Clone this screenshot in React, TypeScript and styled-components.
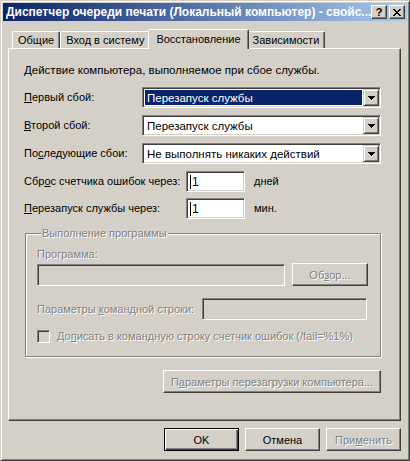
import styled, { createGlobalStyle } from "styled-components";

const GlobalStyle = createGlobalStyle`
  html, body {
    margin: 0;
    padding: 0;
    background: #d4d0c8;
  }
  body {
    font-family: "Liberation Sans", Arial, sans-serif;
    font-size: 11px;
    color: #000;
  }
`;

const Window = styled.div`
  box-sizing: border-box;
  width: 410px;
  height: 461px;
  background: #d4d0c8;
  border: 1px solid;
  border-color: #d4d0c8 #404040 #404040 #d4d0c8;
  box-shadow: inset 1px 1px #fff, inset -1px -1px #808080;
  padding: 2px;
  display: flex;
  flex-direction: column;
`;

const TitleBar = styled.div`
  height: 18px;
  flex-shrink: 0;
  display: flex;
  align-items: center;
  padding: 0 2px 0 3px;
  background: linear-gradient(to right, #0a246a, #a6caf0);
`;

const Title = styled.div`
  flex: 1;
  color: #fff;
  font-weight: bold;
  font-size: 12px;
  white-space: nowrap;
  overflow: hidden;
`;

const CaptionButton = styled.div<{ $gap?: boolean }>`
  box-sizing: border-box;
  width: 16px;
  height: 14px;
  flex-shrink: 0;
  margin-left: ${(p) => (p.$gap ? "2px" : "0")};
  background: #d4d0c8;
  border: 1px solid;
  border-color: #fff #404040 #404040 #fff;
  box-shadow: inset -1px -1px #808080;
  display: flex;
  align-items: center;
  justify-content: center;
  font-weight: bold;
  font-size: 11px;
  line-height: 1;
  color: #000;
`;

const Content = styled.div`
  flex: 1;
  display: flex;
  flex-direction: column;
  padding: 8px 6px 0 5px;
`;

const TabStrip = styled.div`
  display: flex;
  align-items: flex-end;
  height: 20px;
  margin: 0 0 -1px 4px;
  position: relative;
  z-index: 1;
`;

const Tab = styled.div<{ $active?: boolean }>`
  box-sizing: border-box;
  height: ${(p) => (p.$active ? "20px" : "17px")};
  margin: ${(p) => (p.$active ? "0 -2px" : "0 0 1px 0")};
  padding: ${(p) => (p.$active ? "0 7px" : "0 5px")};
  padding-bottom: ${(p) => (p.$active ? "2px" : "0")};
  position: relative;
  z-index: ${(p) => (p.$active ? 2 : 1)};
  background: #d4d0c8;
  border-top: 1px solid #fff;
  border-left: 1px solid #fff;
  border-right: 1px solid #404040;
  border-radius: 2px 2px 0 0;
  box-shadow: inset -1px 0 #808080;
  display: flex;
  align-items: center;
  white-space: nowrap;
`;

const Panel = styled.div`
  box-sizing: border-box;
  height: 373px;
  background: #d4d0c8;
  border: 1px solid;
  border-color: #fff #404040 #404040 #fff;
  box-shadow: inset -1px -1px #808080;
  padding: 15px 19px 0 15px;
  display: flex;
  flex-direction: column;
`;

const Text = styled.div<{ $disabled?: boolean }>`
  line-height: 13px;
  white-space: nowrap;
  color: ${(p) => (p.$disabled ? "#808080" : "#000")};
  text-shadow: ${(p) => (p.$disabled ? "1px 1px 0 #fff" : "none")};
`;

const Heading = styled(Text)`
  font-size: 11.5px;
`;

const Key = styled.span`
  text-decoration: underline;
`;

const Row = styled.div<{ $top: number }>`
  display: flex;
  align-items: center;
  margin-top: ${(p) => p.$top}px;
`;

const Label = styled(Text)<{ $width: number }>`
  width: ${(p) => p.$width}px;
  flex-shrink: 0;
`;

const Combo = styled.div`
  box-sizing: border-box;
  width: 240px;
  height: 21px;
  display: flex;
  background: #fff;
  border: 1px solid;
  border-color: #808080 #fff #fff #808080;
  box-shadow: inset 1px 1px #404040, inset -1px -1px #d4d0c8;
  padding: 1px;
`;

const ComboValue = styled.div<{ $selected?: boolean }>`
  flex: 1;
  margin: 1px;
  padding: 0 2px;
  display: flex;
  align-items: center;
  white-space: nowrap;
  font-size: 11.5px;
  background: ${(p) => (p.$selected ? "#0a246a" : "#fff")};
  color: ${(p) => (p.$selected ? "#fff" : "#000")};
`;

const DropButton = styled.div`
  box-sizing: border-box;
  width: 16px;
  height: 17px;
  background: #d4d0c8;
  border: 1px solid;
  border-color: #d4d0c8 #404040 #404040 #d4d0c8;
  box-shadow: inset 1px 1px #fff, inset -1px -1px #808080;
  display: flex;
  align-items: center;
  justify-content: center;
`;

const Field = styled.div<{ $width: number; $height?: number; $disabled?: boolean }>`
  box-sizing: border-box;
  width: ${(p) => p.$width}px;
  height: ${(p) => p.$height ?? 21}px;
  flex-shrink: 0;
  background: ${(p) => (p.$disabled ? "#d4d0c8" : "#fff")};
  border: 1px solid;
  border-color: #808080 #fff #fff #808080;
  box-shadow: inset 1px 1px #404040, inset -1px -1px #d4d0c8;
  padding: 0 3px;
  display: flex;
  align-items: center;
  font-size: 12px;
`;

const Caret = styled.span`
  display: inline-block;
  width: 1px;
  height: 14px;
  background: #000;
  margin-right: 1px;
`;

const Unit = styled(Text)`
  margin-left: 9px;
`;

const Group = styled.fieldset`
  box-sizing: border-box;
  width: 356px;
  margin: 8px 0 0 1px;
  padding: 8px 12px 13px 11px;
  border: 1px solid #808080;
  box-shadow: inset 1px 1px #fff, 1px 1px 0 #fff;
  display: flex;
  flex-direction: column;
  min-width: 0;
`;

const Legend = styled.legend`
  margin-left: 4px;
  padding: 0 1px;
  line-height: 13px;
  color: #808080;
  text-shadow: 1px 1px 0 #fff;
  background: #d4d0c8;
  position: relative;
`;

const Button = styled.div<{ $width: number; $default?: boolean; $disabled?: boolean }>`
  box-sizing: border-box;
  width: ${(p) => p.$width}px;
  height: 23px;
  flex-shrink: 0;
  background: #d4d0c8;
  border: 1px solid;
  border-color: ${(p) => (p.$default ? "#000" : "#fff #404040 #404040 #fff")};
  box-shadow: ${(p) =>
    p.$default
      ? "inset 1px 1px #fff, inset -1px -1px #404040, inset -2px -2px #808080"
      : "inset -1px -1px #808080"};
  display: flex;
  align-items: center;
  justify-content: center;
  white-space: nowrap;
  color: ${(p) => (p.$disabled ? "#808080" : "#000")};
  text-shadow: ${(p) => (p.$disabled ? "1px 1px 0 #fff" : "none")};
`;

const BrowseButton = styled(Button)`
  margin-left: 7px;
`;

const CheckRow = styled.div`
  display: flex;
  align-items: center;
  margin-top: 10px;
`;

const CheckBox = styled.div`
  box-sizing: border-box;
  width: 13px;
  height: 13px;
  flex-shrink: 0;
  margin-right: 7px;
  background: #d4d0c8;
  border: 1px solid;
  border-color: #808080 #fff #fff #808080;
  box-shadow: inset 1px 1px #404040, inset -1px -1px #d4d0c8;
`;

const RightButton = styled.div`
  display: flex;
  justify-content: flex-end;
  margin-top: 13px;
`;

const Footer = styled.div`
  display: flex;
  justify-content: flex-end;
  gap: 6px;
  margin-top: 7px;
`;

const Arrow = () => (
  <svg width="7" height="4" viewBox="0 0 7 4">
    <path d="M0 0h7v1H0zM1 1h5v1H1zM2 2h3v1H2zM3 3h1v1H3z" fill="#000" />
  </svg>
);

const CloseGlyph = () => (
  <svg width="8" height="7" viewBox="0 0 8 7">
    <path
      d="M0 0h2v1H0zM6 0h2v1H6zM1 1h2v1H1zM5 1h2v1H5zM2 2h4v1H2zM3 3h2v1H3zM2 4h4v1H2zM1 5h2v1H1zM5 5h2v1H5zM0 6h2v1H0zM6 6h2v1H6z"
      fill="#000"
    />
  </svg>
);

const failures = [
  { label: <><Key>П</Key>ервый сбой:</>, value: "Перезапуск службы", selected: true },
  { label: <><Key>В</Key>торой сбой:</>, value: "Перезапуск службы" },
  { label: <>По<Key>с</Key>ледующие сбои:</>, value: "Не выполнять никаких действий" },
];

export default function App() {
  return (
    <>
      <GlobalStyle />
      <Window>
        <TitleBar>
          <Title>Диспетчер очереди печати (Локальный компьютер) - свойс...</Title>
          <CaptionButton>?</CaptionButton>
          <CaptionButton $gap>
            <CloseGlyph />
          </CaptionButton>
        </TitleBar>
        <Content>
          <TabStrip>
            <Tab>Общие</Tab>
            <Tab>Вход в систему</Tab>
            <Tab $active>Восстановление</Tab>
            <Tab>Зависимости</Tab>
          </TabStrip>
          <Panel>
            <Heading>Действие компьютера, выполняемое при сбое службы.</Heading>
            {failures.map((f, i) => (
              <Row key={i} $top={i === 0 ? 10 : 7}>
                <Label $width={118}>{f.label}</Label>
                <Combo>
                  <ComboValue $selected={f.selected}>{f.value}</ComboValue>
                  <DropButton>
                    <Arrow />
                  </DropButton>
                </Combo>
              </Row>
            ))}
            <Row $top={7}>
              <Label $width={162}>
                Сбр<Key>о</Key>с счетчика ошибок через:
              </Label>
              <Field $width={59}>
                <Caret />1
              </Field>
              <Unit>дней</Unit>
            </Row>
            <Row $top={6}>
              <Label $width={162}>
                <Key>П</Key>ерезапуск службы через:
              </Label>
              <Field $width={59}>
                <Caret />1
              </Field>
              <Unit>мин.</Unit>
            </Row>
            <Group>
              <Legend>Выполнение программы</Legend>
              <Text $disabled>Программа:</Text>
              <Row $top={2}>
                <Field $width={248} $height={22} $disabled />
                <BrowseButton $width={76} $disabled>
                  Об<Key>з</Key>ор...
                </BrowseButton>
              </Row>
              <Row $top={12}>
                <Label $width={165} $disabled>
                  Параметры <Key>к</Key>омандной строки:
                </Label>
                <Field $width={165} $height={22} $disabled />
              </Row>
              <CheckRow>
                <CheckBox />
                <Text $disabled>
                  До<Key>п</Key>исать в командную строку счетчик ошибок (/fail=%1%)
                </Text>
              </CheckRow>
            </Group>
            <RightButton>
              <Button $width={218} $disabled>
                П<Key>а</Key>раметры перезагрузки компьютера...
              </Button>
            </RightButton>
          </Panel>
          <Footer>
            <Button $width={75} $default>
              OK
            </Button>
            <Button $width={75}>Отмена</Button>
            <Button $width={75} $disabled>
              При<Key>м</Key>енить
            </Button>
          </Footer>
        </Content>
      </Window>
    </>
  );
}
